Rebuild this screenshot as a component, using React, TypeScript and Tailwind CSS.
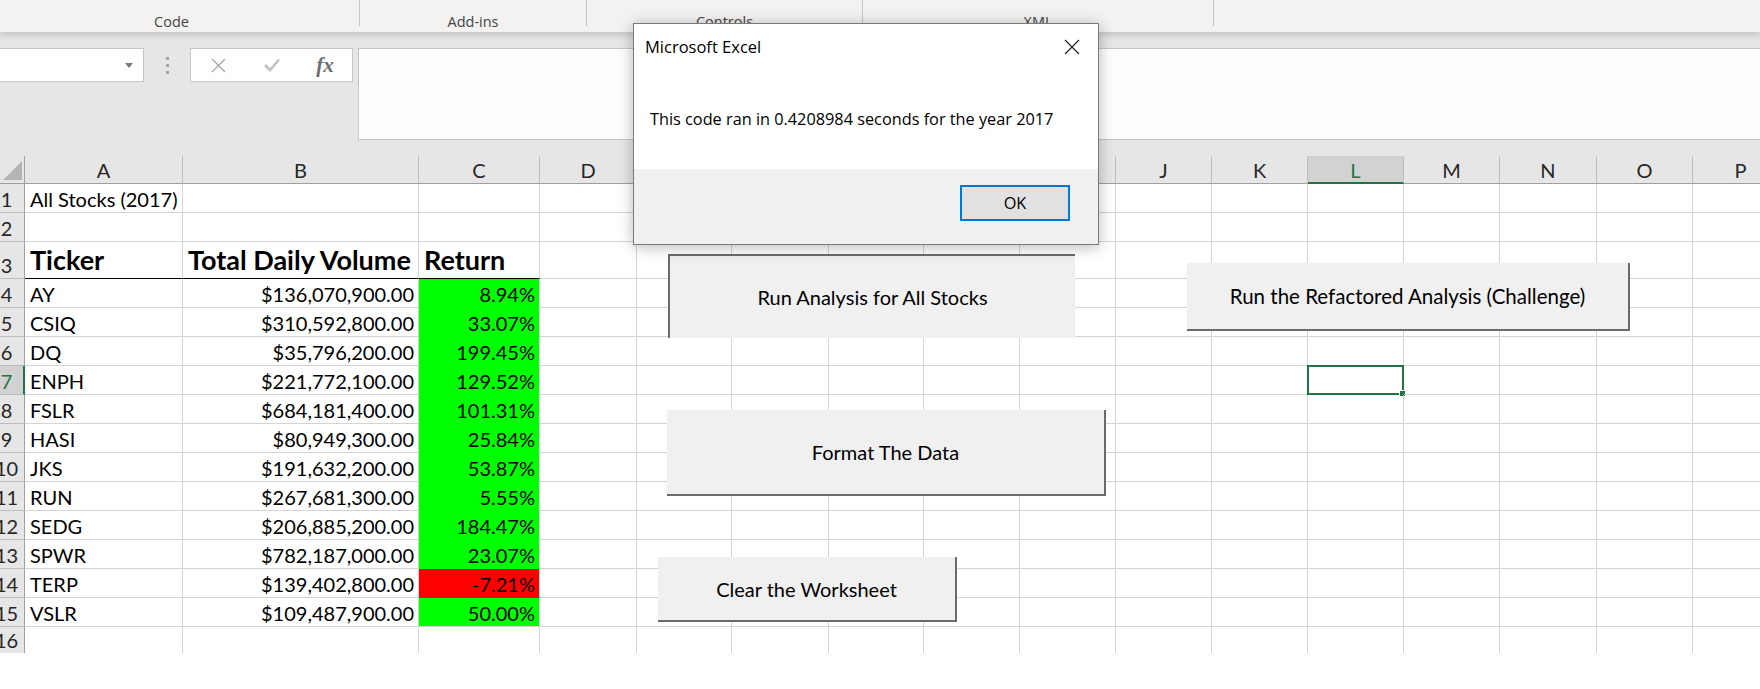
import React from 'react';

const cols = ['A', 'B', 'C', 'D', 'E', 'F', 'G', 'H', 'I', 'J', 'K', 'L', 'M', 'N', 'O', 'P'];

type Row = { t: string; v: string; r: string; neg?: boolean };
const data: Row[] = [
  { t: 'AY', v: '$136,070,900.00', r: '8.94%' },
  { t: 'CSIQ', v: '$310,592,800.00', r: '33.07%' },
  { t: 'DQ', v: '$35,796,200.00', r: '199.45%' },
  { t: 'ENPH', v: '$221,772,100.00', r: '129.52%' },
  { t: 'FSLR', v: '$684,181,400.00', r: '101.31%' },
  { t: 'HASI', v: '$80,949,300.00', r: '25.84%' },
  { t: 'JKS', v: '$191,632,200.00', r: '53.87%' },
  { t: 'RUN', v: '$267,681,300.00', r: '5.55%' },
  { t: 'SEDG', v: '$206,885,200.00', r: '184.47%' },
  { t: 'SPWR', v: '$782,187,000.00', r: '23.07%' },
  { t: 'TERP', v: '$139,402,800.00', r: '-7.21%', neg: true },
  { t: 'VSLR', v: '$109,487,900.00', r: '50.00%' },
];

function Ribbon() {
  const groups = [
    { label: 'Code', w: 'w-[360px] pr-[16px]' },
    { label: 'Add-ins', w: 'w-[227px]' },
    { label: 'Controls', w: 'w-[276px]' },
    { label: 'XML', w: 'w-[351px]' },
  ];
  return (
    <div className="relative z-10 h-[32px] bg-[#f3f2f1] flex shadow-[0_3px_7px_rgba(0,0,0,0.16)] font-['Open_Sans'] text-[14.5px] text-[#444]">
      {groups.map((g) => (
        <div key={g.label} className={`${g.w} h-[26px] border-r border-[#c8c6c4] flex items-center justify-center pt-[16px] leading-[19px]`}>
          {g.label}
        </div>
      ))}
    </div>
  );
}

function FormulaBar() {
  return (
    <div className="h-[124px] bg-[#e6e6e6] flex pt-[16px]">
      <div className="w-[144px] h-[34px] bg-white border border-l-0 border-[#c6c6c6] flex items-center justify-end pr-[10px]">
        <svg width="8" height="5" viewBox="0 0 8 5">
          <path d="M0 0h8L4 5z" fill="#7a7a7a" />
        </svg>
      </div>
      <div className="w-[46px] h-[34px] flex flex-col items-center justify-center gap-[4px]">
        <div className="w-[3px] h-[3px] bg-[#a6a6a6]" />
        <div className="w-[3px] h-[3px] bg-[#a6a6a6]" />
        <div className="w-[3px] h-[3px] bg-[#a6a6a6]" />
      </div>
      <div className="w-[163px] h-[34px] bg-white border border-[#c6c6c6] flex items-center">
        <div className="w-[54px] flex justify-center">
          <svg width="15" height="15" viewBox="0 0 15 15">
            <path d="M1 1L14 14M14 1L1 14" stroke="#a6a6a6" strokeWidth="1.4" />
          </svg>
        </div>
        <div className="w-[53px] flex justify-center">
          <svg width="16" height="14" viewBox="0 0 16 14">
            <path d="M1 7L6 12L15 1.5" stroke="#c2c2c2" strokeWidth="2.6" fill="none" />
          </svg>
        </div>
        <div className="w-[54px] flex justify-center font-['Liberation_Serif'] italic font-bold text-[21px] text-[#6e6e6e] leading-none">
          fx
        </div>
      </div>
      <div className="ml-[5px] flex-1 h-[92px] bg-[#fdfdfd] border border-r-0 border-[#c6c6c6]" />
    </div>
  );
}

function Grid() {
  const cells: React.ReactNode[] = [];
  cells.push(
    <div key="corner" className="bg-[#e6e6e6] border-r border-b border-[#9f9f9f] flex items-end justify-end pr-[2px] pb-[3px]">
      <svg width="19" height="19" viewBox="0 0 19 19">
        <path d="M19 0V19H0z" fill="#b4b4b4" />
      </svg>
    </div>
  );
  cols.forEach((c) => {
    const sel = c === 'L';
    cells.push(
      <div
        key={`h${c}`}
        className={
          sel
            ? 'bg-[#d2d2d2] border-r border-r-[#bcbcbc] border-b-2 border-b-[#217346] flex items-end justify-center pb-[2px] leading-none text-[20px] text-[#217346]'
            : 'bg-[#e6e6e6] border-r border-r-[#bcbcbc] border-b border-b-[#9f9f9f] flex items-end justify-center pb-[3px] leading-none text-[20px] text-[#262626]'
        }
      >
        {c}
      </div>
    );
  });

  for (let r = 1; r <= 16; r++) {
    const selRow = r === 7;
    cells.push(
      <div
        key={`r${r}`}
        className={
          selRow
            ? 'bg-[#d2d2d2] border-r-2 border-r-[#217346] border-b border-b-[#bcbcbc] overflow-hidden flex items-end pb-[3px] leading-none text-[20px] text-[#217346]'
            : r === 16
            ? 'bg-[#e6e6e6] border-r border-r-[#9f9f9f] overflow-hidden flex items-end pb-[3px] leading-none text-[20px] text-[#262626]'
            : 'bg-[#e6e6e6] border-r border-r-[#9f9f9f] border-b border-b-[#bcbcbc] overflow-hidden flex items-end pb-[3px] leading-none text-[20px] text-[#262626]'
        }
      >
        <div className="-ml-[13px] w-[39px] shrink-0 text-center">{r}</div>
      </div>
    );
    cols.forEach((c, ci) => {
      const key = `${c}${r}`;
      let cls = 'relative border-r border-[#d4d4d4] flex items-end pb-[3px] leading-none text-[20px] text-black whitespace-nowrap';
      if (r !== 16) cls += ' border-b';
      let content: React.ReactNode = null;
      if (r === 1 && ci === 0) {
        content = <span className="pl-[5px]">All Stocks (2017)</span>;
      }
      if (r === 3 && ci <= 2) {
        cls = 'relative border-r border-r-[#d4d4d4] border-b border-b-black flex items-end pb-[5px] leading-none text-[27px] font-bold text-black whitespace-nowrap';
        content = <span className="pl-[5px]">{['Ticker', 'Total Daily Volume', 'Return'][ci]}</span>;
      }
      if (r >= 4 && r <= 15 && ci <= 2) {
        const d = data[r - 4];
        if (ci === 0) content = <span className="pl-[5px]">{d.t}</span>;
        if (ci === 1) {
          cls += ' justify-end pr-[4px]';
          content = d.v;
        }
        if (ci === 2) {
          const fill = d.neg ? 'bg-[#ff0000]' : 'bg-[#00ff00]';
          const bb = r === 15 ? 'border-b-[#d4d4d4]' : d.neg ? 'border-b-[#ff0000]' : 'border-b-[#00ff00]';
          cls = `relative ${fill} border-r border-r-[#d4d4d4] border-b ${bb} flex items-end justify-end pr-[4px] pb-[3px] leading-none text-[20px] text-black whitespace-nowrap`;
          content = d.r;
        }
      }
      if (r === 7 && c === 'L') {
        content = (
          <div className="absolute -left-px -top-px w-[97px] h-[30px] border-2 border-[#217346]">
            <div className="absolute -right-[4px] -bottom-[4px] w-[7px] h-[7px] bg-[#217346] border border-white" />
          </div>
        );
      }
      cells.push(
        <div key={key} className={cls}>
          {content}
        </div>
      );
    });
  }

  return (
    <div className="grid grid-cols-[25px_158px_236px_121px_97px_95px_97px_95px_96px_96px_96px_96px_96px_96px_97px_96px_96px] grid-rows-[28px_29px_29px_37px_repeat(12,29px)_26px] w-max">
      {cells}
    </div>
  );
}

function Dialog() {
  return (
    <div className="absolute left-[633px] top-[23px] w-[466px] h-[222px] bg-white border border-[#7a7a7a] shadow-[0_2px_14px_rgba(0,0,0,0.28)] flex flex-col font-['Open_Sans'] text-black z-20">
      <div className="h-[46px] shrink-0 flex items-center justify-between pl-[11px] pr-[18px] text-[16.5px]">
        <span>Microsoft Excel</span>
        <svg width="16" height="16" viewBox="0 0 16 16">
          <path d="M1 1L15 15M15 1L1 15" stroke="#1a1a1a" strokeWidth="1.1" />
        </svg>
      </div>
      <div className="flex-1 flex items-center pl-[16px] text-[16.3px]">
        This code ran in 0.4208984 seconds for the year 2017
      </div>
      <div className="h-[75px] shrink-0 bg-[#f0f0f0] flex justify-end items-start pt-[16px] pr-[28px]">
        <div className="w-[110px] h-[36px] bg-[#e1e1e1] border-2 border-[#0078d7] flex items-center justify-center text-[16.3px]">
          OK
        </div>
      </div>
    </div>
  );
}

function Buttons() {
  return (
    <>
      <div className="absolute left-[668px] top-[254px] w-[407px] h-[84px] bg-[#f0f0f0] border-t-2 border-l-2 border-[#6b6b6b] flex items-center justify-center text-[20px] text-black">
        Run Analysis for All Stocks
      </div>
      <div className="absolute left-[667px] top-[410px] w-[439px] h-[86px] bg-[#f0f0f0] border-r-2 border-b-2 border-[#6b6b6b] flex items-center justify-center text-[20px] text-black">
        Format The Data
      </div>
      <div className="absolute left-[1187px] top-[263px] w-[443px] h-[68px] bg-[#f0f0f0] border-r-2 border-b-2 border-[#6b6b6b] flex items-center justify-center text-[20.5px] text-black">
        Run the Refactored Analysis (Challenge)
      </div>
      <div className="absolute left-[658px] top-[557px] w-[299px] h-[65px] bg-[#f0f0f0] border-r-2 border-b-2 border-[#6b6b6b] flex items-center justify-center text-[20px] text-black">
        Clear the Worksheet
      </div>
    </>
  );
}

export default function App() {
  return (
    <div className="relative w-[1760px] h-[689px] overflow-hidden bg-white font-['Lato']">
      <Ribbon />
      <FormulaBar />
      <Grid />
      <Buttons />
      <Dialog />
    </div>
  );
}
